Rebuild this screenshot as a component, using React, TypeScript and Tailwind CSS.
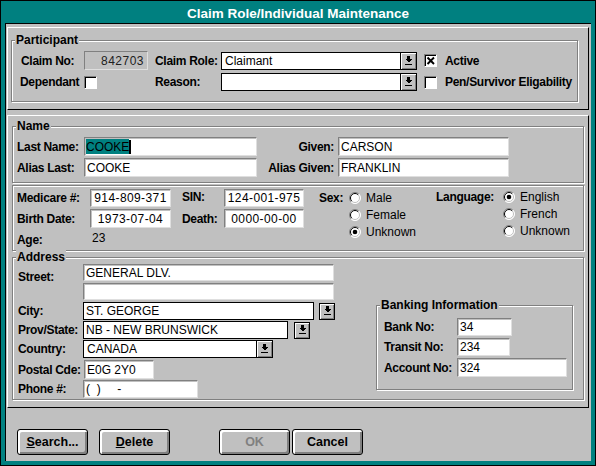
import React from 'react';

// Win 3.1 style "Claim Role/Individual Maintenance" dialog

type Kids = { children?: React.ReactNode; className?: string };

function Label({ children, className = '' }: Kids) {
  return (
    <span className={`text-[12px] tracking-[-0.3px] font-bold leading-[14px] whitespace-nowrap ${className}`}>
      {children}
    </span>
  );
}

function Field({
  children,
  className = '',
  center = false,
  disabled = false,
}: Kids & { center?: boolean; disabled?: boolean }) {
  return (
    <div
      className={`flex items-center overflow-hidden whitespace-nowrap border border-t-[#808080] border-l-[#808080] border-r-[#dfdfdf] border-b-[#dfdfdf] shadow-[inset_1px_1px_0_#c0c0c0] px-[2px] text-[12px] leading-none ${
        disabled ? 'bg-[#c0c0c0] justify-end text-[#202020]' : 'bg-white'
      } ${center ? 'justify-center' : ''} ${className}`}
    >
      {children}
    </div>
  );
}

function DropArrow() {
  return (
    <svg width="9" height="10" viewBox="0 0 9 10" shapeRendering="crispEdges">
      <rect x="3" y="0" width="3" height="3" fill="#000" />
      <polygon points="1,3 8,3 4.5,6.5" fill="#000" />
      <rect x="1" y="8" width="7" height="1" fill="#000" />
    </svg>
  );
}

function DropBtn({ className = '' }: Kids) {
  return (
    <div
      className={`w-[16px] shrink-0 flex items-center justify-center bg-[#c0c0c0] shadow-[inset_1px_1px_0_#fff,inset_-1px_-1px_0_#808080] ${className}`}
    >
      <DropArrow />
    </div>
  );
}

function Combo({ children, className = '' }: Kids) {
  return (
    <div className={`flex border border-black bg-white ${className}`}>
      <div className="flex-1 flex items-center px-[3px] text-[12px] whitespace-nowrap overflow-hidden">
        {children}
      </div>
      <DropBtn className="border-l border-black" />
    </div>
  );
}

function Check({ checked = false }: { checked?: boolean }) {
  return (
    <div className="w-[13px] h-[13px] flex items-center justify-center bg-white border border-t-[#808080] border-l-[#808080] border-r-white border-b-white shadow-[inset_1px_1px_0_#000]">
      {checked && (
        <svg width="9" height="9" viewBox="0 0 9 9">
          <path d="M1.5 1.5L8 8M8 1.5L1.5 8" stroke="#000" strokeWidth="1.9" />
        </svg>
      )}
    </div>
  );
}

function Radio({ on = false, label }: { on?: boolean; label: string }) {
  return (
    <div className="h-[17px] flex items-center gap-[5px]">
      <svg width="12" height="12" viewBox="0 0 12 12">
        <circle cx="6" cy="6" r="5.5" fill="#fff" />
        <path d="M2.1 9.9A5.5 5.5 0 0 1 9.9 2.1" stroke="#808080" fill="none" />
        <path d="M9.9 2.1A5.5 5.5 0 0 1 2.1 9.9" stroke="#fff" fill="none" />
        <path d="M2.8 9.2A4.5 4.5 0 0 1 9.2 2.8" stroke="#000" fill="none" />
        <path d="M9.2 2.8A4.5 4.5 0 0 1 2.8 9.2" stroke="#c0c0c0" fill="none" />
        {on && <circle cx="6" cy="6" r="2.3" fill="#000" />}
      </svg>
      <span className="text-[12px] leading-none">{label}</span>
    </div>
  );
}

function GroupBox({ label, children, className = '' }: Kids & { label?: string }) {
  return (
    <div className={`relative border border-[#808080] shadow-[1px_1px_0_#fff,inset_1px_1px_0_#fff] ${className}`}>
      {label && (
        <span className="absolute left-[3px] -top-[8px] bg-[#c0c0c0] px-[1px] text-[12px] font-bold leading-[14px]">
          {label}
        </span>
      )}
      {children}
    </div>
  );
}

function Btn({ children, disabled = false, className = '' }: Kids & { disabled?: boolean }) {
  return (
    <div
      className={`w-[71px] h-[26px] flex items-center justify-center border border-black rounded-[3px] bg-[#c0c0c0] shadow-[inset_1px_1px_0_#fff,inset_2px_2px_0_#fff,inset_-2px_-2px_0_#808080] text-[12.5px] font-bold ${
        disabled ? 'text-[#808080]' : 'text-black'
      } ${className}`}
    >
      {children}
    </div>
  );
}

const panel = 'ml-[1px] w-[582px] border border-t-white border-l-white border-r-black border-b-black';

export default function App() {
  return (
    <div className="w-[596px] h-[466px] bg-[#008080] border border-black p-[4px] font-['Liberation_Sans',Arial,sans-serif] text-black select-none">
      <div className="h-full flex flex-col">
        <div className="h-[19px] shrink-0 border-b border-black bg-[#008080] text-white text-[13.5px] font-bold leading-[18px] text-center">
          Claim Role/Individual Maintenance
        </div>

        <div className="flex-1 bg-[#c0c0c0] border-l border-black">
          {/* Participant */}
          <div className={`${panel} mt-[3px] h-[83px]`}>
            <GroupBox label="Participant" className="ml-[3px] mt-[12px] w-[567px] h-[62px] pt-[10px] pl-[9px]">
              <div className="grid grid-cols-[63px_71px_66px_203px_21px_auto] grid-rows-[19px_18px] gap-y-[3px] items-center">
                <Label>Claim No:</Label>
                <Field disabled className="w-[64px] h-[19px] tracking-[0.5px] pr-[3px]">842703</Field>
                <Label>Claim Role:</Label>
                <Combo className="w-[196px] h-[18px]">Claimant</Combo>
                <Check checked />
                <Label>Active</Label>

                <Label className="-ml-[1px]">Dependant</Label>
                <Check />
                <Label>Reason:</Label>
                <Combo className="w-[196px] h-[18px]" />
                <Check />
                <Label>Pen/Survivor Eligability</Label>
              </div>
            </GroupBox>
          </div>

          <div className={`${panel} mt-[5px] h-[293px]`}>
            {/* Name */}
            <GroupBox label="Name" className="ml-[4px] mt-[10px] w-[572px] h-[57px] pl-[4px] pt-[10px]">
              <div className="grid grid-cols-[67px_173px_81px_171px] grid-rows-[19px_19px] gap-y-[2px] items-center">
                <Label>Last Name:</Label>
                <Field className="h-[19px] !px-[1px]">
                  <span className="h-[15px] flex items-center bg-[#008080]">COOKE</span>
                  <span className="w-[2px] h-[14px] bg-black" />
                </Field>
                <Label className="text-right pr-[4px]">Given:</Label>
                <Field className="h-[19px]">CARSON</Field>

                <Label>Alias Last:</Label>
                <Field className="h-[19px]">COOKE</Field>
                <Label className="text-right pr-[4px]">Alias Given:</Label>
                <Field className="h-[19px]">FRANKLIN</Field>
              </div>
            </GroupBox>

            {/* Medicare / sex / language */}
            <GroupBox className="ml-[4px] mt-[2px] w-[572px] h-[66px] pl-[4px] pt-[3px] flex items-start">
              <div className="grid grid-cols-[73px_81px_11px_42px_80px] grid-rows-[18px_19px_19px] gap-y-[2px] items-center">
                <Label>Medicare #:</Label>
                <Field center className="h-[18px] tracking-[0.4px]">914-809-371</Field>
                <span />
                <Label className="-mt-[2px]">SIN:</Label>
                <Field center className="h-[18px] tracking-[0.4px]">124-001-975</Field>

                <Label>Birth Date:</Label>
                <Field center className="h-[19px] tracking-[0.4px]">1973-07-04</Field>
                <span />
                <Label>Death:</Label>
                <Field center className="h-[19px] tracking-[0.4px]">0000-00-00</Field>

                <Label>Age:</Label>
                <span className="text-[12px] leading-none pl-[2px] -mt-[3px]">23</span>
                <span />
                <span />
                <span />
              </div>

              <div className="ml-[15px] w-[117px] flex">
                <Label className="w-[30px] h-[17px] flex items-center">Sex:</Label>
                <div className="flex flex-col">
                  <Radio label="Male" />
                  <Radio label="Female" />
                  <Radio on label="Unknown" />
                </div>
              </div>

              <div className="flex -mt-[1px]">
                <Label className="w-[67px] h-[17px] flex items-center">Language:</Label>
                <div className="flex flex-col">
                  <Radio on label="English" />
                  <Radio label="French" />
                  <Radio label="Unknown" />
                </div>
              </div>
            </GroupBox>

            {/* Address */}
            <GroupBox label="Address" className="ml-[4px] mt-[6px] w-[572px] h-[143px] flex items-start">
              <div className="pl-[5px] pt-[6px] flex flex-col">
                <div className="flex h-[17px]">
                  <Label className="w-[65px] pt-[6px]">Street:</Label>
                  <Field className="w-[251px] h-[17px]">GENERAL DLV.</Field>
                </div>
                <div className="flex h-[17px] mt-[2px]">
                  <span className="w-[65px]" />
                  <Field className="w-[251px] h-[17px]" />
                </div>
                <div className="flex h-[18px] mt-[2px] items-center">
                  <Label className="w-[65px]">City:</Label>
                  <div className="w-[231px] h-[18px] border border-black bg-white flex items-center px-[2px] text-[12px]">
                    ST. GEORGE
                  </div>
                  <DropBtn className="ml-[5px] h-[17px] border border-black" />
                </div>
                <div className="flex h-[18px] mt-[1px] items-center">
                  <Label className="w-[65px]">Prov/State:</Label>
                  <div className="w-[205px] h-[18px] border border-black bg-white flex items-center px-[2px] text-[12px]">
                    NB - NEW BRUNSWICK
                  </div>
                  <DropBtn className="ml-[6px] h-[17px] border border-black" />
                </div>
                <div className="flex h-[18px] mt-[1px] items-center">
                  <Label className="w-[65px]">Country:</Label>
                  <Combo className="w-[190px] h-[18px]">CANADA</Combo>
                </div>
                <div className="flex h-[19px] mt-[2px] items-center">
                  <Label className="w-[65px]">Postal Cde:</Label>
                  <Field className="ml-[1px] w-[70px] h-[19px]">E0G 2Y0</Field>
                </div>
                <div className="flex h-[18px] mt-[1px] items-center">
                  <Label className="w-[65px]">Phone #:</Label>
                  <Field className="w-[115px] h-[18px]">
                    <span className="whitespace-pre">(  )     -</span>
                  </Field>
                </div>
              </div>

              <GroupBox label="Banking Information" className="ml-[41px] mt-[47px] w-[197px] h-[85px] pl-[7px] pt-[12px]">
                <div className="grid grid-cols-[73px_auto] grid-rows-[18px_18px_19px] gap-y-[2px] items-center">
                  <Label>Bank No:</Label>
                  <Field className="w-[55px] h-[18px]">34</Field>
                  <Label>Transit No:</Label>
                  <Field className="w-[53px] h-[18px]">234</Field>
                  <Label>Account No:</Label>
                  <Field className="w-[110px] h-[19px]">324</Field>
                </div>
              </GroupBox>
            </GroupBox>
          </div>

          {/* Buttons */}
          <div className="mt-[21px] ml-[11px] flex">
            <Btn>
              <span><u>S</u>earch...</span>
            </Btn>
            <Btn className="ml-[11px]">
              <span><u>D</u>elete</span>
            </Btn>
            <Btn disabled className="ml-[49px]">OK</Btn>
            <Btn className="ml-[2px]">Cancel</Btn>
          </div>
        </div>
      </div>
    </div>
  );
}
